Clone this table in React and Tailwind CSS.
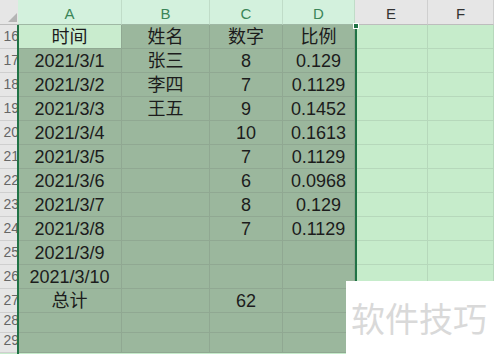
import React from 'react';

const cols = [
  { key: 'A', w: 'w-[104px]', sel: true },
  { key: 'B', w: 'w-[88px]', sel: true },
  { key: 'C', w: 'w-[73px]', sel: true },
  { key: 'D', w: 'w-[72px]', sel: true },
  { key: 'E', w: 'w-[73px]', sel: false },
  { key: 'F', w: 'flex-1', sel: false },
];

const rows = [
  { n: 16, v: ['时间', '姓名', '数字', '比例'] },
  { n: 17, v: ['2021/3/1', '张三', '8', '0.129'] },
  { n: 18, v: ['2021/3/2', '李四', '7', '0.1129'] },
  { n: 19, v: ['2021/3/3', '王五', '9', '0.1452'] },
  { n: 20, v: ['2021/3/4', '', '10', '0.1613'] },
  { n: 21, v: ['2021/3/5', '', '7', '0.1129'] },
  { n: 22, v: ['2021/3/6', '', '6', '0.0968'] },
  { n: 23, v: ['2021/3/7', '', '8', '0.129'] },
  { n: 24, v: ['2021/3/8', '', '7', '0.1129'] },
  { n: 25, v: ['2021/3/9', '', '', ''] },
  { n: 26, v: ['2021/3/10', '', '', ''] },
  { n: 27, v: ['总计', '', '62', ''] },
  { n: 28, v: ['', '', '', ''], short: true },
  { n: 29, v: ['', '', '', ''], short: true },
];

const font = { fontFamily: '"Liberation Sans", "Noto Sans CJK SC", sans-serif' };

export default function App() {
  return (
    <div className="relative w-[494px] h-[354px] overflow-hidden bg-[#c6eccb]" style={font}>
      {/* 列标题 */}
      <div className="flex h-[25px]">
        <div className="w-[18px] shrink-0 bg-[#e6e6e6] border-b border-[#bdbdbd] flex items-end justify-end pr-[1px] pb-[2px]">
          <div className="w-0 h-0 border-l-[9px] border-l-transparent border-b-[9px] border-b-[#b4b4b4]" />
        </div>
        {cols.map((c) => (
          <div
            key={c.key}
            className={`${c.w} shrink-0 flex items-end justify-center text-[15px] leading-[20px] border-r border-b ${
              c.sel
                ? 'bg-[#d3f1dd] text-[#3a8558] border-r-[#c0dcc8] border-b-[#9fb8a4]'
                : 'bg-[#e6e6e6] text-[#333] border-r-[#cfcfcf] border-b-[#bdbdbd]'
            }`}
          >
            {c.key}
          </div>
        ))}
      </div>

      {/* 数据行 */}
      {rows.map((r) => (
        <div key={r.n} className={`flex ${r.short ? 'h-[20px]' : 'h-[24px]'}`}>
          <div className="w-[18px] shrink-0 bg-[#e6e6e6] border-b border-[#cfcfcf] flex items-end justify-end overflow-hidden pb-[1px] text-[14px] text-[#666]">
            <span className="-mr-[1px]">{r.n}</span>
          </div>
          {cols.map((c, i) => {
            const active = r.n === 16 && i === 0;
            const bg = active ? 'bg-[#c9ecce]' : c.sel ? 'bg-[#9bb79d]' : 'bg-[#c6eccb]';
            const line = c.sel ? 'border-[#90a892]' : 'border-[#b6d8bb]';
            return (
              <div
                key={c.key}
                className={`${c.w} shrink-0 ${bg} border-r border-b ${line} flex items-end justify-center text-[18px] leading-[22px] text-[#1c1c1c] whitespace-nowrap`}
              >
                {c.sel ? r.v[i] : ''}
              </div>
            );
          })}
        </div>
      ))}

      {/* 选区边框 */}
      <div className="absolute left-[17px] top-[25px] w-[340px] bottom-0 border-l-2 border-r-2 border-[#217346] pointer-events-none" />
      <div className="absolute left-[353px] top-[23px] w-[6px] h-[6px] bg-[#217346] border border-white" />

      {/* 水印 */}
      <div className="absolute left-[346px] top-[281px] right-0 bottom-0 bg-white flex items-center pl-[5px]">
        <span className="text-[34px] text-[#d9d9d9] leading-none" style={{ fontFamily: '"Noto Sans CJK SC", sans-serif' }}>
          软件技巧
        </span>
      </div>
    </div>
  );
}
